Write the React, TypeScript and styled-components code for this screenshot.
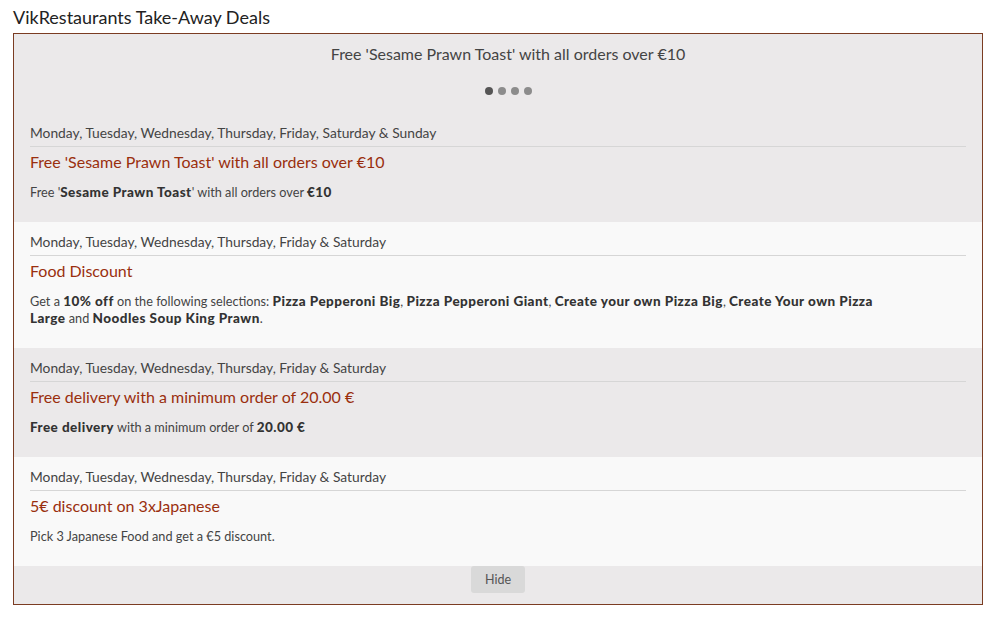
import React from 'react';
import styled, { createGlobalStyle } from 'styled-components';

const GlobalStyle = createGlobalStyle`
  body {
    margin: 0;
    background: #ffffff;
    font-family: Lato, 'Open Sans', sans-serif;
    color: #444;
  }
`;

type Deal = {
  days: string;
  title: string;
  body: React.ReactNode;
};

const deals: Deal[] = [
  {
    days: 'Monday, Tuesday, Wednesday, Thursday, Friday, Saturday & Sunday',
    title: "Free 'Sesame Prawn Toast' with all orders over €10",
    body: (
      <>
        Free '<b>Sesame Prawn Toast</b>' with all orders over <b>€10</b>
      </>
    ),
  },
  {
    days: 'Monday, Tuesday, Wednesday, Thursday, Friday & Saturday',
    title: 'Food Discount',
    body: (
      <>
        Get a <b>10% off</b> on the following selections: <b>Pizza Pepperoni Big</b>,{' '}
        <b>Pizza Pepperoni Giant</b>, <b>Create your own Pizza Big</b>,{' '}
        <b>Create Your own Pizza Large</b> and <b>Noodles Soup King Prawn</b>.
      </>
    ),
  },
  {
    days: 'Monday, Tuesday, Wednesday, Thursday, Friday & Saturday',
    title: 'Free delivery with a minimum order of 20.00 €',
    body: (
      <>
        <b>Free delivery</b> with a minimum order of <b>20.00 €</b>
      </>
    ),
  },
  {
    days: 'Monday, Tuesday, Wednesday, Thursday, Friday & Saturday',
    title: '5€ discount on 3xJapanese',
    body: <>Pick 3 Japanese Food and get a €5 discount.</>,
  },
];

const App = () => {
  return (
    <Page>
      <GlobalStyle />
      <Heading>VikRestaurants Take-Away Deals</Heading>
      <DealsBox>
        <Slider>
          <SlideText>Free 'Sesame Prawn Toast' with all orders over €10</SlideText>
          <Dots>
            {[0, 1, 2, 3].map((i) => (
              <Dot key={i} $active={i === 0} />
            ))}
          </Dots>
        </Slider>

        {deals.map((deal, i) => (
          <DealRow key={i} $light={i % 2 === 1}>
            <Days>{deal.days}</Days>
            <DealTitle>{deal.title}</DealTitle>
            <DealBody>{deal.body}</DealBody>
          </DealRow>
        ))}

        <Footer>
          <HideBtn>Hide</HideBtn>
        </Footer>
      </DealsBox>
    </Page>
  );
};

const Page = styled.div`
  padding: 6px 13px 0 13px;
  width: 970px;
`;

const Heading = styled.div`
  font-size: 18px;
  line-height: 22px;
  color: #222;
  margin-bottom: 5px;
`;

const DealsBox = styled.div`
  border: 1px solid #7b3c22;
  background-color: #ebe9ea;
`;

const Slider = styled.div`
  display: flex;
  flex-direction: column;
  align-items: center;
  padding: 10px 0 0 20px;
  height: 69px;
`;

const SlideText = styled.div`
  font-size: 16px;
  line-height: 20px;
  color: #444;
`;

const Dots = styled.div`
  display: flex;
  gap: 5px;
  margin-top: 23px;
`;

const Dot = styled.span<{ $active: boolean }>`
  width: 8px;
  height: 8px;
  border-radius: 50%;
  background-color: ${(p) => (p.$active ? '#555' : '#8c8c8c')};
`;

const DealRow = styled.div<{ $light: boolean }>`
  padding: 12px 16px 21px 16px;
  background-color: ${(p) => (p.$light ? '#f9f9f9' : '#ebe9ea')};
`;

const Days = styled.div`
  font-size: 13.8px;
  line-height: 16px;
  color: #444;
  padding-bottom: 5px;
  border-bottom: 1px solid #d6d6d6;
`;

const DealTitle = styled.div`
  margin-top: 5px;
  font-size: 16px;
  line-height: 20px;
  color: #9a2f0e;
`;

const DealBody = styled.div`
  margin-top: 12px;
  font-size: 12.7px;
  line-height: 17px;
  color: #444;
  padding-right: 70px;

  b {
    font-size: 13.5px;
    line-height: 1;
    font-weight: 900;
    letter-spacing: 0.45px;
    color: #333;
  }
`;

const Footer = styled.div`
  display: flex;
  justify-content: center;
  padding: 0 0 11px 0;
`;

const HideBtn = styled.div`
  width: 54px;
  height: 27px;
  display: flex;
  align-items: center;
  justify-content: center;
  background-color: #d9d9d9;
  border-radius: 3px;
  font-size: 12.5px;
  color: #555;
  cursor: pointer;
`;

export default App;
